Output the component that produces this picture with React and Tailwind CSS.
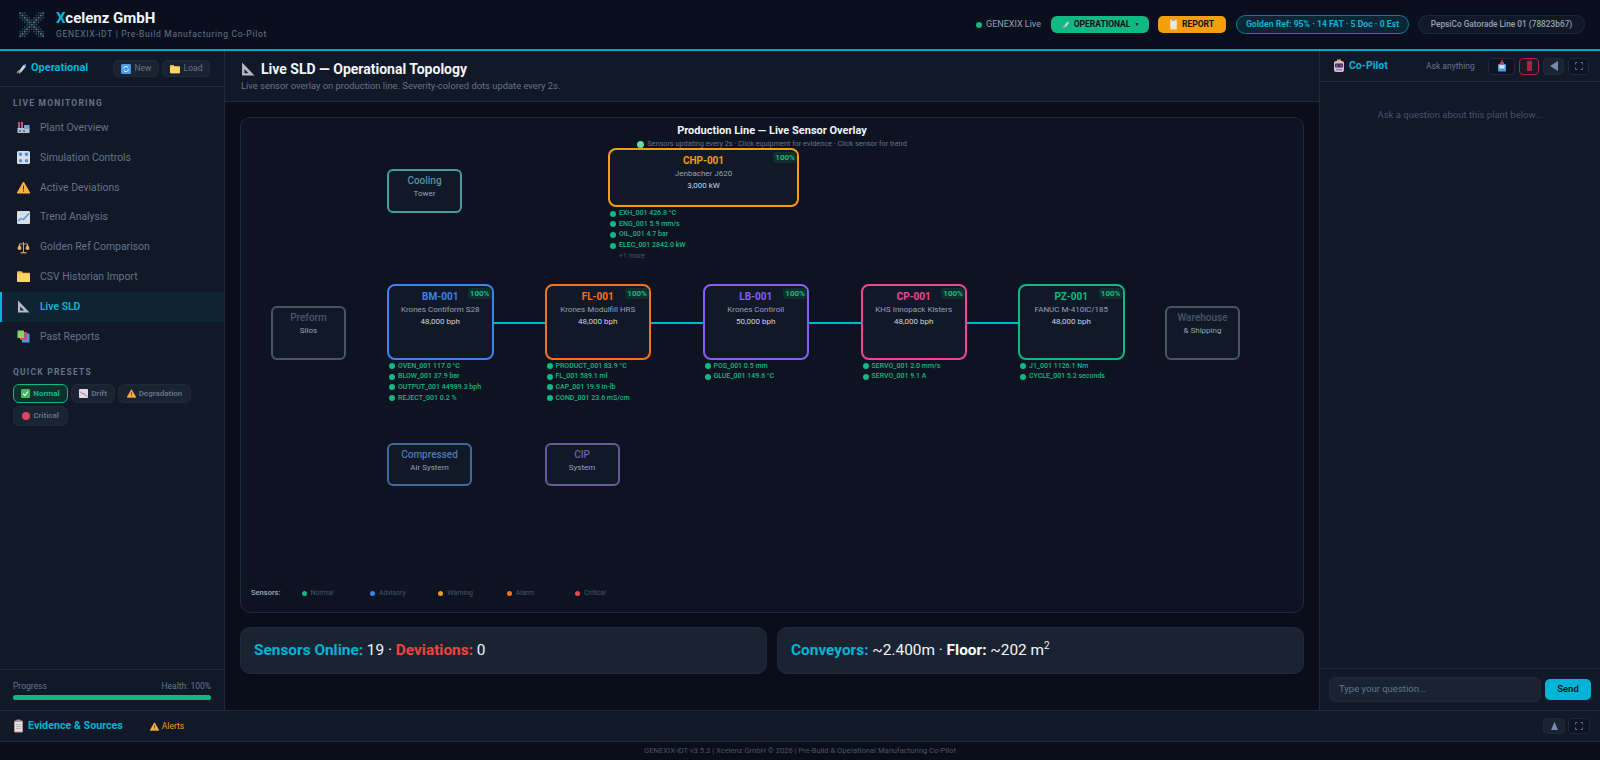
import React from "react";

const font = { fontFamily: 'Roboto, "Noto Sans", sans-serif' };

const Logo = () => {
  const dots = [];
  for (let r = 0; r < 11; r++) {
    for (let c = 0; c < 11; c++) {
      const d = Math.min(Math.abs(r - c), Math.abs(r + c - 10));
      if (d <= 2) {
        dots.push(<circle key={r + "-" + c} cx={1.2 + c * 2.3} cy={1.2 + r * 2.3} r={d === 0 ? 1.05 : 0.85} fill={d === 0 ? "#4f7484" : "#2f4c5c"} />);
      }
    }
  }
  return <svg width="26" height="26" viewBox="0 0 26 26" className="shrink-0">{dots}</svg>;
};

const Rocket = ({ s = 12 }) => (
  <svg width={s} height={s} viewBox="0 0 12 12" className="shrink-0">
    <path d="M4 8 8 2.5 11 1 10.5 4 6 9.5Z" fill="#cbd5e1" />
    <path d="M8.5 2.2 11 1 10.7 3.6Z" fill="#3b82f6" />
    <path d="M2.5 8 4.5 7 6 9 4.5 11 3.5 9.5 1.5 10.5Z" fill="#94a3b8" />
  </svg>
);
const NewIcon = () => (
  <svg width="10" height="10" viewBox="0 0 10 10" className="shrink-0">
    <rect width="10" height="10" rx="1.2" fill="#4a9be8" />
    <path d="M2.5 4.5a2.6 2.6 0 0 1 4.6-1M7.5 5.5a2.6 2.6 0 0 1-4.6 1" stroke="#fff" strokeWidth="1" fill="none" />
  </svg>
);
const Folder = ({ s = 10 }) => (
  <svg width={s} height={s} viewBox="0 0 12 12" className="shrink-0">
    <path d="M0 2.2C0 1.6.4 1.2 1 1.2h3.2l1.2 1.4H11c.6 0 1 .4 1 1V10c0 .6-.4 1-1 1H1c-.6 0-1-.4-1-1Z" fill="#f5c04d" />
    <rect y="3.4" width="12" height="7.6" rx="1" fill="#fcd468" />
  </svg>
);
const Factory = () => (
  <svg width="13" height="13" viewBox="0 0 13 13" className="shrink-0">
    <rect x="1" y="1" width="2" height="7" fill="#c0567a" />
    <rect x="4" y="1" width="2" height="7" fill="#b06488" />
    <rect x="0.5" y="7" width="12" height="5" fill="#b8c0cc" />
    <rect x="7" y="4" width="5.5" height="4" fill="#6aa8dc" />
    <rect x="2" y="9" width="2" height="2" fill="#64748b" />
    <rect x="6" y="9" width="2" height="2" fill="#64748b" />
  </svg>
);
const Controls = () => (
  <svg width="13" height="13" viewBox="0 0 13 13" className="shrink-0">
    <rect width="13" height="13" rx="1.6" fill="#d8dde8" />
    {[3.5, 9.5].flatMap((x) => [3.2, 9.8].map((y) => <circle key={x + "_" + y} cx={x} cy={y} r="1.7" fill="#4a8fd8" />))}
  </svg>
);
const Warn = ({ s = 13 }) => (
  <svg width={s} height={s} viewBox="0 0 13 13" className="shrink-0">
    <path d="M6.5 1 12.8 12H.2Z" fill="#fbb040" stroke="#fbb040" strokeLinejoin="round" />
    <rect x="6" y="4.6" width="1" height="4" fill="#3a2a10" />
    <rect x="6" y="9.4" width="1" height="1.1" fill="#3a2a10" />
  </svg>
);
const Chart = () => (
  <svg width="13" height="13" viewBox="0 0 13 13" className="shrink-0">
    <rect width="13" height="13" rx="1.2" fill="#d8dde8" />
    <path d="M1 10 4 7.5 6.5 8.5 12 2.5" stroke="#4a8fd8" strokeWidth="1.2" fill="none" />
  </svg>
);
const Scales = () => (
  <svg width="13" height="13" viewBox="0 0 13 13" className="shrink-0">
    <path d="M6.5 1v10M2 3h9" stroke="#d0a060" strokeWidth="1" />
    <path d="M0.5 7 2.5 3l2 4a2 2 0 0 1-4 0ZM8.5 7l2-4 2 4a2 2 0 0 1-4 0Z" fill="#e8b060" />
    <rect x="3.5" y="11" width="6" height="1.4" fill="#c89858" />
  </svg>
);
const Ruler = ({ s = 13 }) => (
  <svg width={s} height={s} viewBox="0 0 13 13" className="shrink-0">
    <path d="M1 .5 12.5 12.5H1Z" fill="#b8b8c4" />
    <path d="M3.2 6.5 7 10.5H3.2Z" fill="#1a2030" />
  </svg>
);
const Cards = () => (
  <svg width="13" height="13" viewBox="0 0 13 13" className="shrink-0">
    <rect x="5" y="3.5" width="7.5" height="9" rx=".6" fill="#4a9be8" />
    <rect x="3" y="2" width="7" height="8" rx=".6" fill="#d04a70" />
    <rect x="0.5" y="0.5" width="6.5" height="7.5" rx=".6" fill="#7cd860" />
  </svg>
);
const Check = () => (
  <svg width="9" height="9" viewBox="0 0 9 9" className="shrink-0">
    <rect width="9" height="9" rx="1" fill="#3fb860" />
    <path d="M2 4.5 3.8 6.5 7 2.5" stroke="#fff" strokeWidth="1.1" fill="none" />
  </svg>
);
const Down = () => (
  <svg width="9" height="9" viewBox="0 0 9 9" className="shrink-0">
    <rect width="9" height="9" rx=".8" fill="#d8dde8" />
    <path d="M1 2.5 3.5 5 5 4.5 8 7.5" stroke="#e04a70" strokeWidth="1" fill="none" />
  </svg>
);
const Clipboard = () => (
  <svg width="11" height="14" viewBox="0 0 11 14" className="shrink-0">
    <rect x="1" y="1.5" width="9" height="12" rx="1" fill="#b89078" />
    <rect x="2" y="2.8" width="7" height="9.8" fill="#e8e0d8" />
    <rect x="3.5" y="0.5" width="4" height="2.4" rx=".5" fill="#94a3b8" />
    <path d="M3 5.5h5M3 7.5h5M3 9.5h5" stroke="#94a3b8" strokeWidth=".7" />
  </svg>
);
const Robot = () => (
  <svg width="12" height="14" viewBox="0 0 12 14" className="shrink-0">
    <rect x="4" y="0.5" width="4" height="2" fill="#d8b060" />
    <rect x="1" y="2" width="10" height="11" rx="2" fill="#d8b8d0" />
    <rect x="2" y="4.5" width="8" height="4" rx="1" fill="#2a3560" />
    <circle cx="4" cy="6.5" r=".9" fill="#e04a70" />
    <circle cx="8" cy="6.5" r=".9" fill="#e04a70" />
    <rect x="3" y="10" width="6" height="1.4" fill="#8a7ca8" />
  </svg>
);
const Inbox = () => (
  <svg width="10" height="12" viewBox="0 0 10 12">
    <rect x="1" y="4" width="8" height="7.5" rx=".8" fill="#4a9be8" />
    <rect x="2.5" y="5" width="5" height="3.5" fill="#d8e4f4" />
    <path d="M5 0v4M3.3 2.5 5 4.6 6.7 2.5" stroke="#e0445c" strokeWidth="1.3" fill="none" />
  </svg>
);
const Expand = () => (
  <svg width="8" height="8" viewBox="0 0 8 8" fill="none" stroke="#64748b" strokeWidth=".9">
    <path d="M.5 2.5v-2h2M5.5.5h2v2M7.5 5.5v2h-2M2.5 7.5h-2v-2" />
  </svg>
);
const Memo = () => (
  <svg width="7" height="11" viewBox="0 0 7 11" className="shrink-0">
    <rect x=".2" y=".5" width="6.6" height="10" rx="1" fill="#ece6da" />
    <rect x="1.8" y="0" width="3.4" height="2" fill="#a8a8b4" />
  </svg>
);

const nav = [
  [Factory, "Plant Overview"],
  [Controls, "Simulation Controls"],
  [Warn, "Active Deviations"],
  [Chart, "Trend Analysis"],
  [Scales, "Golden Ref Comparison"],
  [() => <Folder s={13} />, "CSV Historian Import"],
  [Ruler, "Live SLD", true],
  [Cards, "Past Reports"],
];

const machines = [
  { id: "BM-001", model: "Krones Contiform S28", cap: "48,000 bph", x: 146, c: "border-[#3b82f6]", t: "text-[#3b82f6]", sensors: ["OVEN_001 117.0 °C", "BLOW_001 37.9 bar", "OUTPUT_001 44989.3 bph", "REJECT_001 0.2 %"] },
  { id: "FL-001", model: "Krones Modulfill HRS", cap: "48,000 bph", x: 303.5, c: "border-[#f97316]", t: "text-[#f97316]", sensors: ["PRODUCT_001 83.9 °C", "FL_001 589.1 ml", "CAP_001 19.9 in-lb", "COND_001 23.6 mS/cm"] },
  { id: "LB-001", model: "Krones Contiroll", cap: "50,000 bph", x: 461.5, c: "border-[#8b5cf6]", t: "text-[#8b5cf6]", sensors: ["POS_001 0.5 mm", "GLUE_001 149.6 °C"] },
  { id: "CP-001", model: "KHS Innopack Kisters", cap: "48,000 bph", x: 619.5, c: "border-[#ec4899]", t: "text-[#ec4899]", sensors: ["SERVO_001 2.0 mm/s", "SERVO_001 9.1 A"] },
  { id: "PZ-001", model: "FANUC M-410iC/185", cap: "48,000 bph", x: 777, c: "border-[#10b981]", t: "text-[#10b981]", sensors: ["J1_001 1126.1 Nm", "CYCLE_001 5.2 seconds"] },
];

const Badge = () => (
  <span className="absolute top-[2px] right-0 rounded-[3px] bg-[#0f2f2e] px-[2px] text-[8px] leading-[11px] font-bold text-[#10b981]">100%</span>
);

const Sensors = ({ items, more }) => (
  <div className="flex flex-col pt-[1.5px] pl-[2px]">
    {items.map((s) => (
      <div key={s} className="flex h-[10.6px] items-center gap-[3px] whitespace-nowrap text-[7px] leading-none font-medium text-[#10b981]">
        <span className="h-[6px] w-[6px] shrink-0 rounded-full bg-[#10b981]" />
        {s}
      </div>
    ))}
    {more && <div className="flex h-[10.6px] items-center pl-[9px] text-[7px] leading-none text-[#475569]">{more}</div>}
  </div>
);

const Machine = ({ m }) => (
  <div className="absolute top-[166px] w-[106.5px]" style={{ left: m.x }}>
    <div className={"relative flex h-[75.5px] flex-col items-center rounded-[8px] border-2 bg-[#111827] pt-[3px] " + m.c}>
      <Badge />
      <span className={"text-[10px] leading-[15px] font-bold " + m.t}>{m.id}</span>
      <span className="text-[8px] leading-[11.5px] whitespace-nowrap text-[#94a3b8]">{m.model}</span>
      <span className="text-[8px] leading-[11.5px] whitespace-nowrap text-[#cbd5e1]">{m.cap}</span>
    </div>
    <Sensors items={m.sensors} />
  </div>
);

const Aux = ({ x, y, w, h, name, sub, c, t }) => (
  <div
    className={"absolute flex flex-col items-center rounded-[6px] border-2 bg-[#111827] pt-[2px] " + c}
    style={{ left: x, top: y, width: w, height: h }}
  >
    <span className={"text-[10px] leading-[15px] font-medium " + t}>{name}</span>
    <span className="text-[8px] leading-[11px] text-[#94a3b8]">{sub}</span>
  </div>
);

const Line = ({ x, w }) => <div className="absolute top-[203.5px] h-[2px] bg-[#00b4d8]" style={{ left: x, width: w }} />;

const legend = [
  ["Normal", "bg-[#10b981]"],
  ["Advisory", "bg-[#3b82f6]"],
  ["Warning", "bg-[#f59e0b]"],
  ["Alarm", "bg-[#f97316]"],
  ["Critical", "bg-[#ef4444]"],
];

export default function App() {
  return (
    <div style={font} className="flex h-[760px] w-[1600px] flex-col overflow-hidden bg-[#0a0e1a] text-[#e2e8f0]">
      <header className="flex h-[51px] shrink-0 items-center justify-between border-b-[2px] border-[#00a9c7] bg-[#0a0f1e] pr-[15px] pl-[19px]">
        <div className="flex items-center gap-[11px]">
          <Logo />
          <div className="flex flex-col">
            <span className="text-[15px] leading-[19px] font-bold text-[#f1f5f9]"><span className="text-[#00b4d8]">X</span>celenz GmbH</span>
            <span className="text-[8.5px] leading-[13px] tracking-[0.7px] text-[#64748b]">GENEXIX-iDT | Pre-Build Manufacturing Co-Pilot</span>
          </div>
        </div>
        <div className="flex items-center">
          <span className="h-[6px] w-[6px] rounded-full bg-[#10b981]" />
          <span className="ml-[4px] w-[56px] text-[9px] text-[#94a3b8]">GENEXIX Live</span>
          <button className="ml-[9px] flex h-[17px] w-[98px] items-center justify-center gap-[4px] rounded-[6px] bg-[#10b981] text-[8.5px] font-bold text-[#0a0e1a]"><Rocket s={9} />OPERATIONAL <span className="text-[5px]">▼</span></button>
          <button className="ml-[9px] flex h-[17px] w-[68px] items-center justify-center gap-[5px] rounded-[5px] bg-[#f59e0b] text-[8.5px] font-bold text-[#0a0e1a]"><Memo />REPORT</button>
          <span className="ml-[10px] flex h-[19px] w-[173px] items-center justify-center rounded-full border border-[#00819b] bg-[#0b2534] text-[8.7px] font-bold whitespace-nowrap text-[#00b4d8]">Golden Ref: 95% · 14 FAT · 5 Doc · 0 Est</span>
          <span className="ml-[9px] flex h-[19px] w-[167px] items-center justify-center rounded-full border border-[#1e293b] bg-[#111827] text-[8.3px] font-medium whitespace-nowrap text-[#94a3b8]">PepsiCo Gatorade Line 01 (78823b67)</span>
        </div>
      </header>

      <div className="flex min-h-0 flex-1">
        <aside className="flex w-[225px] shrink-0 flex-col border-r border-[#1e293b] bg-[#111827]">
          <div className="flex h-[36px] shrink-0 items-center justify-between border-b border-[#1e293b] pr-[14px] pl-[15px]">
            <div className="flex items-center gap-[4px]">
              <Rocket />
              <span className="text-[11px] font-bold text-[#00b4d8]">Operational</span>
            </div>
            <div className="flex gap-[3px]">
              <button className="flex h-[17px] w-[46px] items-center justify-center gap-[4px] rounded-[5px] border border-[#1e293b] bg-[#1a2332] text-[8.5px] text-[#64748b]"><NewIcon />New</button>
              <button className="flex h-[17px] w-[48px] items-center justify-center gap-[4px] rounded-[5px] border border-[#1e293b] bg-[#1a2332] text-[8.5px] text-[#64748b]"><Folder />Load</button>
            </div>
          </div>
          <div className="pt-[10px] pl-[13px] text-[8.5px] leading-[12px] font-bold tracking-[1.2px] text-[#64748b]">LIVE MONITORING</div>
          <nav className="mt-[4px] flex flex-col">
            {nav.map(([I, label, on]) => (
              <div key={label} className={"flex h-[29.8px] items-center gap-[10px] border-l-[2.5px] pl-[15px] text-[10.4px] " + (on ? "border-[#00b4d8] bg-[#0e2433] font-semibold text-[#00b4d8]" : "border-transparent text-[#64748b]")}>
                <I />
                {label}
              </div>
            ))}
          </nav>
          <div className="pt-[14.5px] pl-[13px] text-[8.5px] leading-[12px] font-bold tracking-[1.2px] text-[#64748b]">QUICK PRESETS</div>
          <div className="flex w-[210px] flex-wrap gap-x-[3px] gap-y-[3px] pt-[6px] pl-[13px]">
            <span className="flex h-[19.5px] w-[55px] items-center justify-center gap-[3px] rounded-[6px] border border-[#10b981] bg-[#0f2f2e] text-[8px] font-bold text-[#10b981]"><Check />Normal</span>
            <span className="flex h-[19.5px] w-[44px] items-center justify-center gap-[3px] rounded-[6px] border border-[#1e293b] bg-[#1a2332] text-[8px] font-semibold text-[#64748b]"><Down />Drift</span>
            <span className="flex h-[19.5px] w-[73px] items-center justify-center gap-[3px] rounded-[6px] border border-[#1e293b] bg-[#1a2332] text-[8px] font-semibold text-[#64748b]"><Warn s={9} />Degradation</span>
            <span className="flex h-[19.5px] w-[55px] items-center justify-center gap-[3px] rounded-[6px] border border-[#1e293b] bg-[#1a2332] text-[8px] font-semibold text-[#64748b]"><span className="h-[8px] w-[8px] rounded-full bg-[#e0445c]" />Critical</span>
          </div>
          <div className="mt-auto h-[41px] shrink-0 border-t border-[#1e293b] px-[13px] pt-[11px]">
            <div className="flex justify-between text-[8.5px] leading-[11px] text-[#64748b]"><span>Progress</span><span>Health: 100%</span></div>
            <div className="mt-[3px] h-[5px] rounded-full bg-[#10b981]" />
          </div>
        </aside>

        <main className="flex min-w-0 flex-1 flex-col">
          <div className="h-[51px] shrink-0 border-b border-[#1e293b] bg-[#111827] pt-[9px] pl-[16px]">
            <div className="flex items-center gap-[6px] text-[14px] leading-[18px] font-bold text-[#f1f5f9]"><Ruler s={14} />Live SLD — Operational Topology</div>
            <div className="mt-[1px] text-[9.4px] leading-[13px] text-[#64748b]">Live sensor overlay on production line. Severity-colored dots update every 2s.</div>
          </div>
          <div className="flex min-h-0 flex-1 flex-col gap-[14px] pt-[15px] pr-[15px] pl-[15px]">
            <section className="relative h-[496px] shrink-0 rounded-[10px] border border-[#1e293b] bg-[#0d1320]">
              <div className="flex flex-col items-center pt-[5px]">
                <div className="text-[11px] leading-[15px] font-bold text-[#f1f5f9]">Production Line — Live Sensor Overlay</div>
                <div className="flex items-center gap-[3px] text-[7.3px] leading-[12px] text-[#64748b]"><span className="h-[7px] w-[7px] rounded-full bg-[#5ee0a0]" />Sensors updating every 2s · Click equipment for evidence · Click sensor for trend</div>
              </div>
              <Line x={251.5} w={52} />
              <Line x={409.5} w={52} />
              <Line x={567.5} w={52} />
              <Line x={725.5} w={52} />
              <Aux x={30} y={188} w={75} h={54} name="Preform" sub="Silos" c="border-[#475569]" t="text-[#475569]" />
              <Aux x={924} y={188} w={75} h={54} name="Warehouse" sub="& Shipping" c="border-[#475569]" t="text-[#475569]" />
              <Aux x={146} y={51} w={75} h={43.5} name="Cooling" sub="Tower" c="border-[#4c99a0]" t="text-[#4c99a0]" />
              <Aux x={146} y={324.5} w={85} h={43.5} name="Compressed" sub="Air System" c="border-[#41699e]" t="text-[#4d78b8]" />
              <Aux x={303.5} y={324.5} w={75} h={43.5} name="CIP" sub="System" c="border-[#67589f]" t="text-[#6a5cb8]" />
              <div className="absolute top-[30px] left-[367px] w-[191px]">
                <div className="relative flex h-[59px] flex-col items-center rounded-[8px] border-2 border-[#f59e0b] bg-[#111827] pt-[3px]">
                  <Badge />
                  <span className="text-[10px] leading-[15px] font-bold text-[#f59e0b]">CHP-001</span>
                  <span className="text-[8px] leading-[11.5px] text-[#94a3b8]">Jenbacher J620</span>
                  <span className="text-[8px] leading-[11.5px] text-[#cbd5e1]">3,000 kW</span>
                </div>
                <Sensors items={["EXH_001 426.8 °C", "ENG_001 5.9 mm/s", "OIL_001 4.7 bar", "ELEC_001 2842.0 kW"]} more="+1 more" />
              </div>
              {machines.map((m) => <Machine key={m.id} m={m} />)}
              <div className="absolute top-[469px] left-[10px] flex items-center text-[7px] leading-[12px]">
                <span className="w-[50.5px] text-[7.5px] font-semibold text-[#94a3b8]">Sensors:</span>
                {legend.map(([l, c]) => (
                  <span key={l} className="flex w-[68.4px] items-center gap-[4px] text-[#475569]"><span className={"h-[5px] w-[5px] rounded-full " + c} />{l}</span>
                ))}
              </div>
            </section>
            <div className="grid h-[47px] shrink-0 grid-cols-2 gap-[10px]">
              <div className="flex items-center rounded-[10px] border border-[#1e293b] bg-[#1a2332] pl-[13px] text-[15.4px] whitespace-pre text-[#f1f5f9]">
                <b className="font-bold text-[#00b4d8]">Sensors Online:</b> 19 · <b className="font-bold text-[#ef4444]">Deviations:</b> 0
              </div>
              <div className="flex items-center rounded-[10px] border border-[#1e293b] bg-[#1a2332] pl-[13px] text-[15.4px] whitespace-pre text-[#f1f5f9]">
                <b className="font-bold text-[#00b4d8]">Conveyors:</b> ~2.400m · <b className="font-bold text-white">Floor:</b> ~202 m<sup className="text-[10px]">2</sup>
              </div>
            </div>
          </div>
        </main>

        <aside className="flex w-[281px] shrink-0 flex-col border-l border-[#1e293b] bg-[#111827]">
          <div className="flex h-[31px] shrink-0 items-center border-b border-[#1e293b] pl-[13px]">
            <Robot />
            <span className="ml-[4px] w-[77px] text-[10.5px] font-bold text-[#00b4d8]">Co-Pilot</span>
            <span className="w-[62px] text-[8.5px] text-[#64748b]">Ask anything</span>
            <div className="flex items-center gap-[4px]">
              <button className="flex h-[17px] w-[27px] items-center justify-center rounded-[4px] border border-[#1e293b] bg-[#0d1320]"><Inbox /></button>
              <button className="flex h-[17px] w-[20px] items-center justify-center rounded-[4px] border border-[#b91c3c] bg-[#1a1a28]"><span className="h-[10px] w-[5px] bg-[#b91c3c]" /></button>
              <button className="flex h-[17px] w-[21px] items-center justify-center rounded-[4px] border border-[#1e293b] bg-[#1a2332]"><svg width="8" height="10" viewBox="0 0 8 10"><path d="M8 0v10L0 5Z" fill="#7a8aa8" /></svg></button>
              <button className="flex h-[17px] w-[21px] items-center justify-center rounded-[4px] border border-[#1e293b] bg-[#0d1320]"><Expand /></button>
            </div>
          </div>
          <div className="flex-1 pt-[26px] text-center text-[9.5px] leading-[13px] text-[#475569]">Ask a question about this plant below...</div>
          <div className="flex h-[42px] shrink-0 items-center gap-[4px] border-t border-[#1e293b] px-[9px]">
            <div className="flex h-[25px] w-[212px] items-center rounded-[6px] border border-[#1e293b] bg-[#1a2332] pl-[9px] text-[9.5px] text-[#64748b]">Type your question...</div>
            <button className="h-[21px] w-[46px] rounded-[5px] bg-[#00b4d8] text-[9.5px] font-semibold text-[#0a0e1a]">Send</button>
          </div>
        </aside>
      </div>

      <div className="flex h-[32px] shrink-0 items-center border-t border-b border-[#1e293b] bg-[#111827] pr-[10px] pl-[13px]">
        <Clipboard />
        <span className="ml-[4px] text-[10.7px] font-bold text-[#00b4d8]">Evidence & Sources</span>
        <span className="ml-[27px] flex items-center gap-[3px] text-[8.5px] text-[#f59e0b]"><Warn s={9} />Alerts</span>
        <div className="ml-auto flex gap-[3px]">
          <button className="flex h-[16px] w-[22px] items-center justify-center rounded-[4px] border border-[#1e293b] bg-[#1a2332]"><svg width="7" height="8" viewBox="0 0 7 8"><path d="M3.5 0 7 8H0Z" fill="#7a8aa8" /></svg></button>
          <button className="flex h-[16px] w-[22px] items-center justify-center rounded-[4px] border border-[#1e293b] bg-[#0d1320]"><Expand /></button>
        </div>
      </div>
      <footer className="flex h-[18px] shrink-0 items-center justify-center bg-[#0a0e1a] text-[7.6px] text-[#475569]">GENEXIX-iDT v3.5.3 | Xcelenz GmbH © 2026 | Pre-Build & Operational Manufacturing Co-Pilot</footer>
    </div>
  );
}
